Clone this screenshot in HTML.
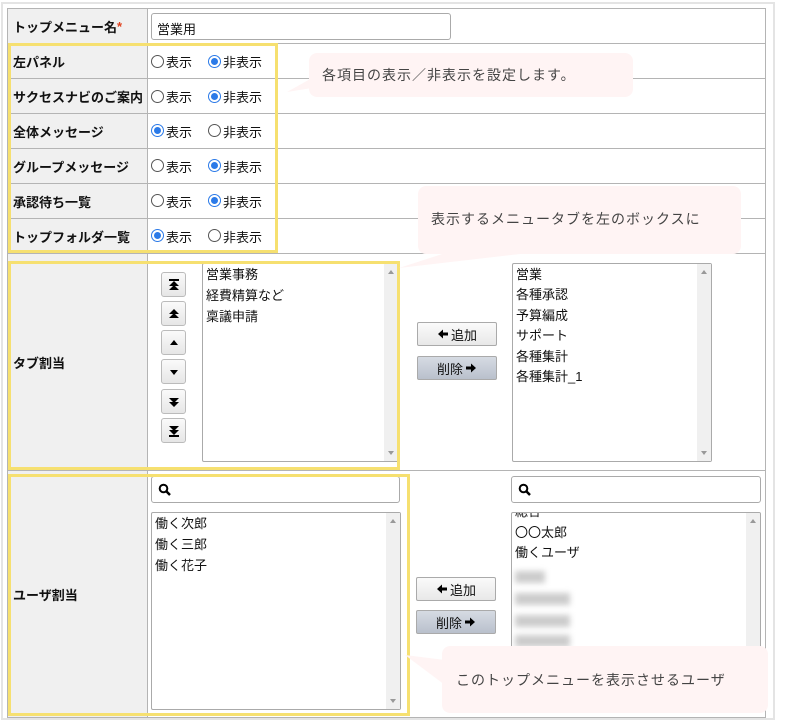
<!DOCTYPE html>
<html><head><meta charset="utf-8"><style>
*{box-sizing:border-box;margin:0;padding:0}
body{width:787px;height:725px;background:#fff;font-family:"Liberation Sans","Noto Sans CJK JP",sans-serif;font-size:13px;color:#111;position:relative;overflow:hidden}
.a{position:absolute}
.frame{left:1px;top:2px;width:774px;height:718px;border:2px solid #e4e4e4}
.hl{position:absolute;left:7px;width:759px;height:1px;background:#b4b4b4}
.lab{position:absolute;left:8px;width:139px;background:#f0f0f0;font-weight:bold;padding-left:5px;display:flex;align-items:center}
.radio{position:absolute;width:13px;height:13px;border-radius:50%;border:1px solid #555;background:#fff}
.radio.on{border:1px solid #2b7ae8}
.radio.on::after{content:"";position:absolute;left:2px;top:2px;width:7px;height:7px;border-radius:50%;background:#2b7ae8}
.rt{position:absolute;font-size:13px}
.box{position:absolute;border:1px solid #aaa;border-radius:2px;background:#fff}
.sb{position:absolute;right:0;top:0;bottom:0;width:14px;background:#f0f0f0}
.sb::before{content:"";position:absolute;left:4px;top:6px;border:3px solid transparent;border-bottom:4px solid #999;border-top:0}
.sb.dn::after{content:"";position:absolute;left:4px;bottom:6px;border:3px solid transparent;border-top:4px solid #999;border-bottom:0}
.it{position:absolute;left:3px;font-size:13px;line-height:21px}
.ab{position:absolute;left:161px;width:25px;height:25px;border:1px solid #bbb;border-radius:3px;background:linear-gradient(#fafafa,#e6e6e6)}
.ab svg{position:absolute;left:6px;top:6px}
.btn{position:absolute;width:80px;height:24px;border:1px solid #aaa;border-radius:2px;background:linear-gradient(#fafafa,#e8e8e8);font-size:13px;display:flex;align-items:center;justify-content:center;gap:2px}
.btn.d{background:linear-gradient(#d6dbe3,#b9c0cc)}
.yb{position:absolute;border:3px solid #f6e070}
.co{position:absolute;background:#fff4f4;border-radius:8px;color:#444;font-size:14px;letter-spacing:1px}
.srch{position:absolute;height:27px;border:1px solid #aaa;border-radius:3px;background:#fff}
</style></head><body>
<div class="a frame"></div>
<div class="a" style="left:7px;top:8px;width:1px;height:710px;background:#b4b4b4"></div>
<div class="a" style="left:765px;top:8px;width:1px;height:710px;background:#b4b4b4"></div>
<div class="a" style="left:147px;top:8px;width:1px;height:710px;background:#b4b4b4"></div>

<div class="lab" style="top:9px;height:34px">トップメニュー名<span style="color:#e0401c">*</span></div>
<div class="lab" style="top:44px;height:34px">左パネル</div>
<div class="lab" style="top:79px;height:34px">サクセスナビのご案内</div>
<div class="lab" style="top:114px;height:34px">全体メッセージ</div>
<div class="lab" style="top:149px;height:34px">グループメッセージ</div>
<div class="lab" style="top:184px;height:34px">承認待ち一覧</div>
<div class="lab" style="top:219px;height:34px">トップフォルダ一覧</div>
<div class="lab" style="top:254px;height:216px">タブ割当</div>
<div class="lab" style="top:471px;height:247px">ユーザ割当</div>

<div class="hl" style="top:8px"></div>
<div class="hl" style="top:43px"></div>
<div class="hl" style="top:78px"></div>
<div class="hl" style="top:113px"></div>
<div class="hl" style="top:148px"></div>
<div class="hl" style="top:183px"></div>
<div class="hl" style="top:218px"></div>
<div class="hl" style="top:253px"></div>
<div class="hl" style="top:470px"></div>
<div class="hl" style="top:717px"></div>

<div class="box" style="left:151px;top:13px;width:300px;height:27px;border-radius:3px"><span class="a" style="left:5px;top:5px">営業用</span></div>

<div class="radio" style="left:151px;top:55px"></div><span class="rt" style="left:166px;top:52px">表示</span>
<div class="radio on" style="left:208px;top:55px"></div><span class="rt" style="left:223px;top:52px">非表示</span>
<div class="radio" style="left:151px;top:90px"></div><span class="rt" style="left:166px;top:87px">表示</span>
<div class="radio on" style="left:208px;top:90px"></div><span class="rt" style="left:223px;top:87px">非表示</span>
<div class="radio on" style="left:151px;top:124px"></div><span class="rt" style="left:166px;top:122px">表示</span>
<div class="radio" style="left:208px;top:124px"></div><span class="rt" style="left:223px;top:122px">非表示</span>
<div class="radio" style="left:151px;top:159px"></div><span class="rt" style="left:166px;top:157px">表示</span>
<div class="radio on" style="left:208px;top:159px"></div><span class="rt" style="left:223px;top:157px">非表示</span>
<div class="radio" style="left:151px;top:194px"></div><span class="rt" style="left:166px;top:192px">表示</span>
<div class="radio on" style="left:208px;top:194px"></div><span class="rt" style="left:223px;top:192px">非表示</span>
<div class="radio on" style="left:151px;top:229px"></div><span class="rt" style="left:166px;top:227px">表示</span>
<div class="radio" style="left:208px;top:229px"></div><span class="rt" style="left:223px;top:227px">非表示</span>

<!-- tab section -->
<div class="ab" style="top:272px"><svg width="12" height="12" viewBox="0 0 12 12"><rect x="1" y="0" width="10" height="2"/><path d="M6 2L11 7H1Z M6 6L11 11H1Z"/></svg></div>
<div class="ab" style="top:301px"><svg width="12" height="12" viewBox="0 0 12 12"><path d="M6 1L11 6H1Z M6 5L11 10H1Z"/></svg></div>
<div class="ab" style="top:330px"><svg width="12" height="12" viewBox="0 0 12 12"><path d="M6 3L10 8H2Z"/></svg></div>
<div class="ab" style="top:359px"><svg width="12" height="12" viewBox="0 0 12 12"><path d="M6 9L10 4H2Z"/></svg></div>
<div class="ab" style="top:389px"><svg width="12" height="12" viewBox="0 0 12 12"><path d="M6 11L11 6H1Z M6 7L11 2H1Z"/></svg></div>
<div class="ab" style="top:418px"><svg width="12" height="12" viewBox="0 0 12 12"><rect x="1" y="10" width="10" height="2"/><path d="M6 10L11 5H1Z M6 6L11 1H1Z"/></svg></div>
<div class="box" style="left:202px;top:263px;width:197px;height:199px"><div class="sb dn"></div>
<div class="it" style="top:0">営業事務</div><div class="it" style="top:21px">経費精算など</div><div class="it" style="top:42px">稟議申請</div></div>
<div class="btn" style="left:417px;top:322px"><svg width="12" height="12" viewBox="0 0 12 12"><path d="M1 6L6 1.5V4.5H11V7.5H6V10.5Z"/></svg>追加</div>
<div class="btn d" style="left:417px;top:356px">削除<svg width="12" height="12" viewBox="0 0 12 12"><path d="M11 6L6 1.5V4.5H1V7.5H6V10.5Z"/></svg></div>
<div class="box" style="left:512px;top:263px;width:200px;height:199px"><div class="sb dn"></div>
<div class="it" style="top:0">営業</div><div class="it" style="top:20px">各種承認</div><div class="it" style="top:41px">予算編成</div><div class="it" style="top:61px">サポート</div><div class="it" style="top:82px">各種集計</div><div class="it" style="top:102px">各種集計_1</div></div>

<!-- user section -->
<div class="srch" style="left:151px;top:476px;width:249px"><svg class="a" style="left:6px;top:6px" width="14" height="14" viewBox="0 0 14 14"><circle cx="5.5" cy="5.5" r="3.8" fill="none" stroke="#000" stroke-width="2"/><path d="M8.3 8.3L12 12" stroke="#000" stroke-width="2.5"/></svg></div>
<div class="srch" style="left:511px;top:476px;width:250px"><svg class="a" style="left:6px;top:6px" width="14" height="14" viewBox="0 0 14 14"><circle cx="5.5" cy="5.5" r="3.8" fill="none" stroke="#000" stroke-width="2"/><path d="M8.3 8.3L12 12" stroke="#000" stroke-width="2.5"/></svg></div>
<div class="box" style="left:151px;top:512px;width:250px;height:198px"><div class="sb dn"></div>
<div class="it" style="top:0">働く次郎</div><div class="it" style="top:21px">働く三郎</div><div class="it" style="top:42px">働く花子</div></div>
<div class="box" style="left:511px;top:512px;width:250px;height:200px;overflow:hidden"><div class="sb"></div>
<div class="it" style="top:-12px">総合</div><div class="it" style="top:9px">〇〇太郎</div><div class="it" style="top:29px">働くユーザ</div>
<div class="a" style="left:3px;top:58px;width:30px;height:12px;background:#ccc;filter:blur(3px)"></div>
<div class="a" style="left:3px;top:80px;width:55px;height:12px;background:#ccc;filter:blur(3px)"></div>
<div class="a" style="left:3px;top:102px;width:55px;height:12px;background:#ccc;filter:blur(3px)"></div>
<div class="a" style="left:3px;top:122px;width:55px;height:12px;background:#ccc;filter:blur(3px)"></div></div>
<div class="btn" style="left:416px;top:577px"><svg width="12" height="12" viewBox="0 0 12 12"><path d="M1 6L6 1.5V4.5H11V7.5H6V10.5Z"/></svg>追加</div>
<div class="btn d" style="left:416px;top:610px">削除<svg width="12" height="12" viewBox="0 0 12 12"><path d="M11 6L6 1.5V4.5H1V7.5H6V10.5Z"/></svg></div>

<div class="yb" style="left:8px;top:43px;width:270px;height:210px"></div>
<div class="yb" style="left:8px;top:261px;width:392px;height:209px"></div>
<div class="yb" style="left:8px;top:474px;width:402px;height:242px"></div>

<svg class="a" style="left:0;top:0" width="787" height="725">
<polygon points="312,78 287,92 312,88" fill="#fff4f4"/>
<polygon points="470,245 399,268 520,254" fill="#fff4f4"/>
<polygon points="445,660 405,655 445,685" fill="#fff4f4"/>
</svg>
<div class="co" style="left:309px;top:53px;width:324px;height:44px;padding:12px 0 0 13px">各項目の表示／非表示を設定します。</div>
<div class="co" style="left:418px;top:186px;width:323px;height:68px;padding:23px 0 0 13px">表示するメニュータブを左のボックスに</div>
<div class="co" style="left:442px;top:646px;width:326px;height:67px;padding:24px 0 0 14px">このトップメニューを表示させるユーザ</div>
</body></html>
